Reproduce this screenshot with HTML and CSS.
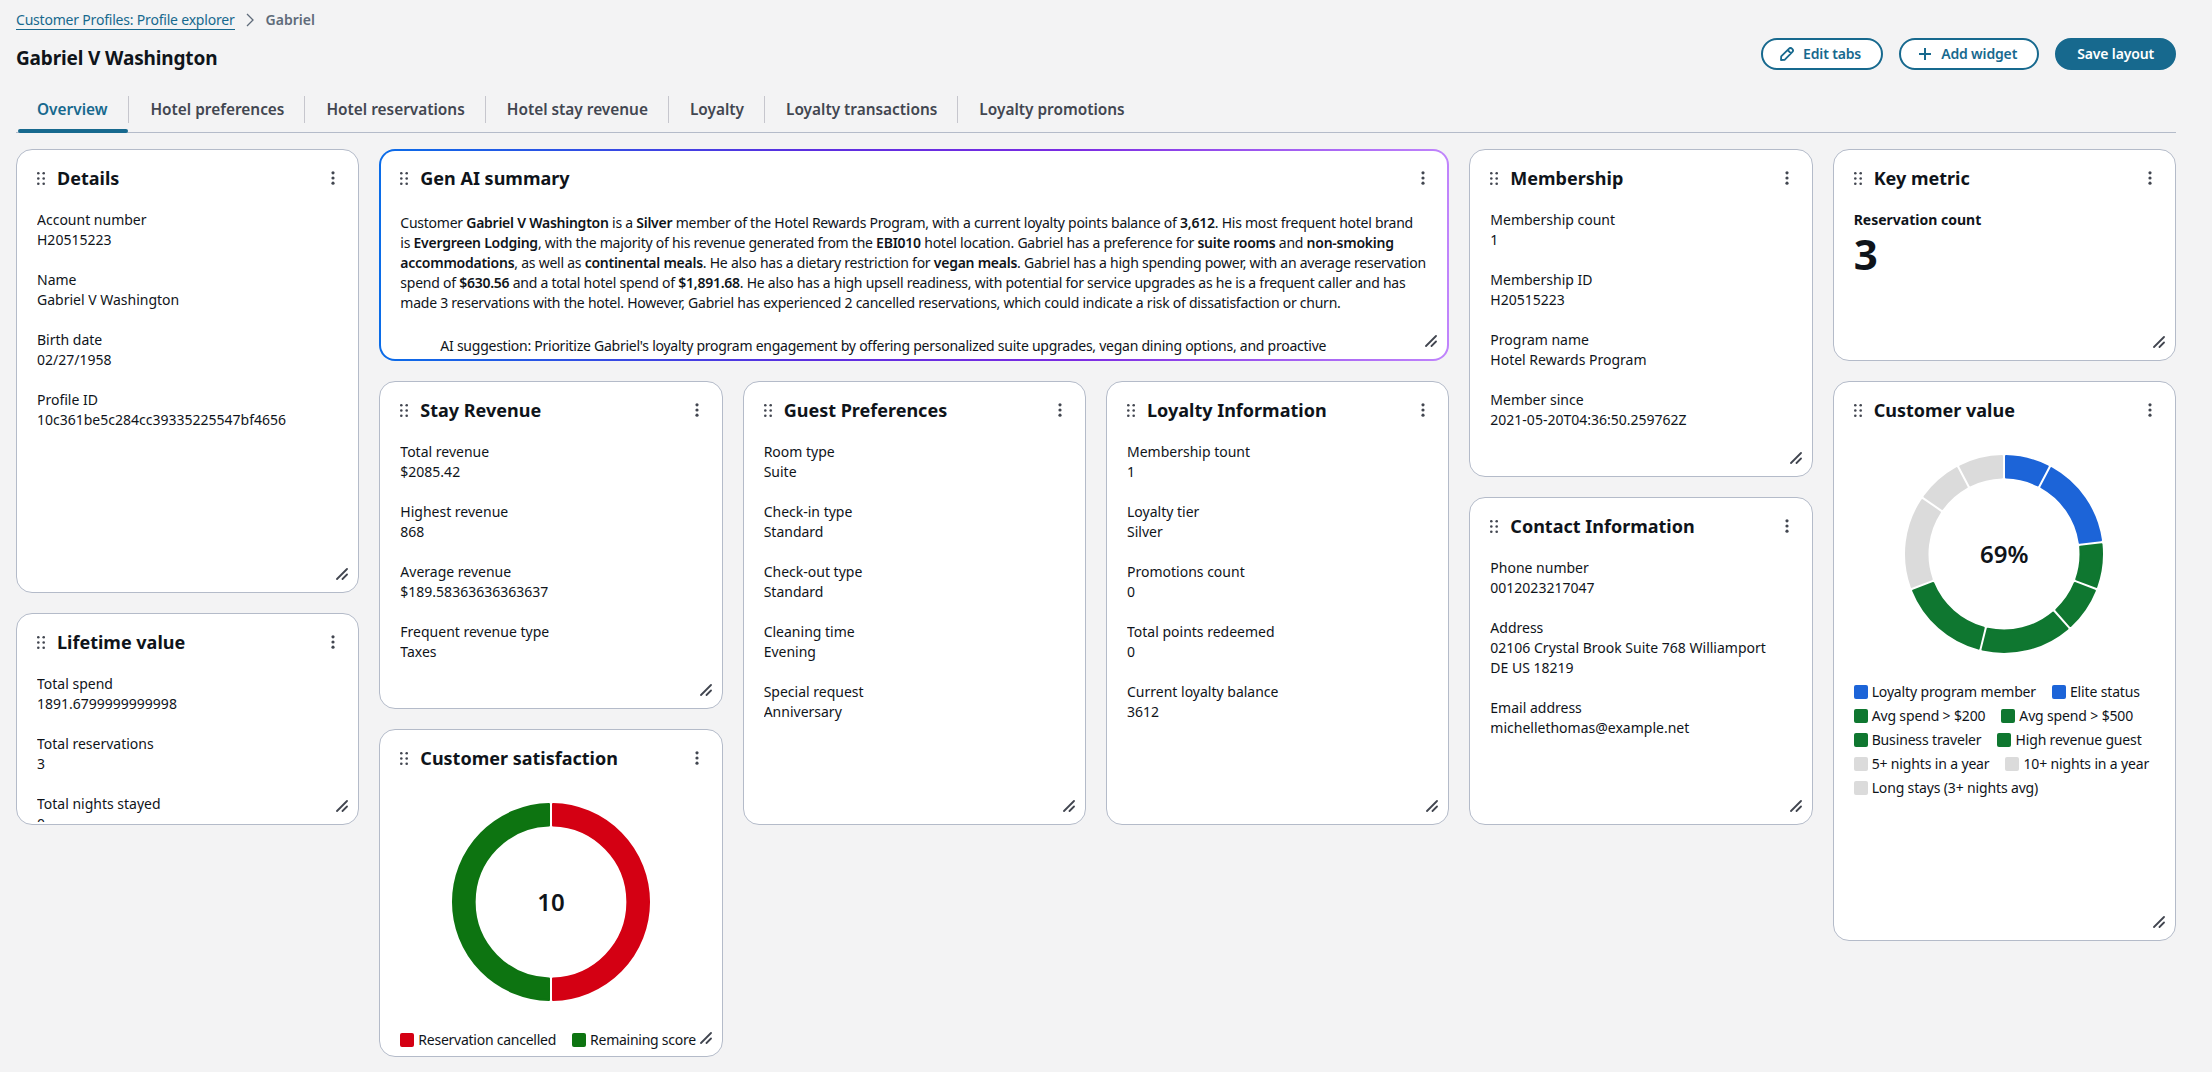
FILE: index.html
```html
<!DOCTYPE html>
<html lang="en">
<head>
    <meta charset="UTF-8">
    <title>Gabriel V Washington</title>
    <link rel="stylesheet" href="styles.css">
</head>
<body>
    <!-- Shared icons -->
    <svg class="sprite" aria-hidden="true">
        <symbol id="i-drag" viewBox="0 0 8 13">
            <circle cx="1.3" cy="1.3" r="1.3"/><circle cx="6.7" cy="1.3" r="1.3"/>
            <circle cx="1.3" cy="6.5" r="1.3"/><circle cx="6.7" cy="6.5" r="1.3"/>
            <circle cx="1.3" cy="11.7" r="1.3"/><circle cx="6.7" cy="11.7" r="1.3"/>
        </symbol>
        <symbol id="i-menu" viewBox="0 0 4 14">
            <circle cx="2" cy="1.8" r="1.6"/><circle cx="2" cy="7" r="1.6"/><circle cx="2" cy="12.2" r="1.6"/>
        </symbol>
        <symbol id="i-resize" viewBox="0 0 12 12">
            <path d="M1 11 11 1M6.5 11 11 6.5" fill="none" stroke="currentColor" stroke-width="1.8" stroke-linecap="round"/>
        </symbol>
    </svg>

    <header class="page-head">
        <div>
            <nav class="crumbs">
                <a href="#">Customer Profiles: Profile explorer</a>
                <svg class="crumb-arrow" viewBox="0 0 8 14"><path d="M1 1l6 6-6 6" fill="none" stroke="currentColor" stroke-width="1.3"/></svg>
                <span>Gabriel</span>
            </nav>
            <h1>Gabriel V Washington</h1>
        </div>
        <div class="actions">
            <button class="btn">
                <svg class="btn-icon" viewBox="0 0 14 14"><path d="M1.2 9.4 8.8 1.8a2.2 2.2 0 0 1 3.4 3.4L4.6 12.8 1 13zM7.6 3l3.4 3.4" fill="none" stroke="currentColor" stroke-width="1.8" stroke-linejoin="round"/></svg>
                Edit tabs
            </button>
            <button class="btn">
                <svg class="btn-icon" viewBox="0 0 14 14"><path d="M7 1v12M1 7h12" fill="none" stroke="currentColor" stroke-width="2"/></svg>
                Add widget
            </button>
            <button class="btn btn-primary">Save layout</button>
        </div>
    </header>

    <nav class="tabs">
        <a href="#" class="tab active">Overview</a>
        <a href="#" class="tab">Hotel preferences</a>
        <a href="#" class="tab">Hotel reservations</a>
        <a href="#" class="tab">Hotel stay revenue</a>
        <a href="#" class="tab">Loyalty</a>
        <a href="#" class="tab">Loyalty transactions</a>
        <a href="#" class="tab">Loyalty promotions</a>
    </nav>

    <main class="board">
        <section class="card w-details">
            <div class="card-head">
                <svg class="drag"><use href="#i-drag"/></svg><h2>Details</h2><svg class="menu"><use href="#i-menu"/></svg>
            </div>
            <dl class="fields">
                <div><dt>Account number</dt><dd>H20515223</dd></div>
                <div><dt>Name</dt><dd>Gabriel V Washington</dd></div>
                <div><dt>Birth date</dt><dd>02/27/1958</dd></div>
                <div><dt>Profile ID</dt><dd>10c361be5c284cc39335225547bf4656</dd></div>
            </dl>
            <svg class="resize"><use href="#i-resize"/></svg>
        </section>

        <section class="card w-lifetime">
            <div class="card-head">
                <svg class="drag"><use href="#i-drag"/></svg><h2>Lifetime value</h2><svg class="menu"><use href="#i-menu"/></svg>
            </div>
            <dl class="fields">
                <div><dt>Total spend</dt><dd>1891.6799999999998</dd></div>
                <div><dt>Total reservations</dt><dd>3</dd></div>
                <div><dt>Total nights stayed</dt><dd>0</dd></div>
            </dl>
            <svg class="resize"><use href="#i-resize"/></svg>
        </section>

        <section class="card card-ai w-summary">
            <div class="card-head">
                <svg class="drag"><use href="#i-drag"/></svg><h2>Gen AI summary</h2><svg class="menu"><use href="#i-menu"/></svg>
            </div>
            <div class="summary">
                <p>Customer <b>Gabriel V Washington</b> is a <b>Silver</b> member of the Hotel Rewards Program, with a current loyalty points balance of <b>3,612</b>. His most frequent hotel brand<br>
                is <b>Evergreen Lodging</b>, with the majority of his revenue generated from the <b>EBI010</b> hotel location. Gabriel has a preference for <b>suite rooms</b> and <b>non-smoking</b><br>
                <b>accommodations</b>, as well as <b>continental meals</b>. He also has a dietary restriction for <b>vegan meals</b>. Gabriel has a high spending power, with an average reservation<br>
                spend of <b>$630.56</b> and a total hotel spend of <b>$1,891.68</b>. He also has a high upsell readiness, with potential for service upgrades as he is a frequent caller and has<br>
                made 3 reservations with the hotel. However, Gabriel has experienced 2 cancelled reservations, which could indicate a risk of dissatisfaction or churn.</p>
                <p class="suggestion">AI suggestion: Prioritize Gabriel's loyalty program engagement by offering personalized suite upgrades, vegan dining options, and proactive</p>
            </div>
            <svg class="resize"><use href="#i-resize"/></svg>
        </section>

        <section class="card w-revenue">
            <div class="card-head">
                <svg class="drag"><use href="#i-drag"/></svg><h2>Stay Revenue</h2><svg class="menu"><use href="#i-menu"/></svg>
            </div>
            <dl class="fields">
                <div><dt>Total revenue</dt><dd>$2085.42</dd></div>
                <div><dt>Highest revenue</dt><dd>868</dd></div>
                <div><dt>Average revenue</dt><dd>$189.58363636363637</dd></div>
                <div><dt>Frequent revenue type</dt><dd>Taxes</dd></div>
            </dl>
            <svg class="resize"><use href="#i-resize"/></svg>
        </section>

        <section class="card w-prefs">
            <div class="card-head">
                <svg class="drag"><use href="#i-drag"/></svg><h2>Guest Preferences</h2><svg class="menu"><use href="#i-menu"/></svg>
            </div>
            <dl class="fields">
                <div><dt>Room type</dt><dd>Suite</dd></div>
                <div><dt>Check-in type</dt><dd>Standard</dd></div>
                <div><dt>Check-out type</dt><dd>Standard</dd></div>
                <div><dt>Cleaning time</dt><dd>Evening</dd></div>
                <div><dt>Special request</dt><dd>Anniversary</dd></div>
            </dl>
            <svg class="resize"><use href="#i-resize"/></svg>
        </section>

        <section class="card w-loyalty">
            <div class="card-head">
                <svg class="drag"><use href="#i-drag"/></svg><h2>Loyalty Information</h2><svg class="menu"><use href="#i-menu"/></svg>
            </div>
            <dl class="fields">
                <div><dt>Membership tount</dt><dd>1</dd></div>
                <div><dt>Loyalty tier</dt><dd>Silver</dd></div>
                <div><dt>Promotions count</dt><dd>0</dd></div>
                <div><dt>Total points redeemed</dt><dd>0</dd></div>
                <div><dt>Current loyalty balance</dt><dd>3612</dd></div>
            </dl>
            <svg class="resize"><use href="#i-resize"/></svg>
        </section>

        <section class="card w-satisfaction">
            <div class="card-head">
                <svg class="drag"><use href="#i-drag"/></svg><h2>Customer satisfaction</h2><svg class="menu"><use href="#i-menu"/></svg>
            </div>
            <div class="donut" data-values="red:1,forest:1" data-label="10"></div>
            <ul class="legend">
                <li><i class="red"></i>Reservation cancelled</li>
                <li><i class="forest"></i>Remaining score</li>
            </ul>
            <svg class="resize"><use href="#i-resize"/></svg>
        </section>

        <section class="card w-membership">
            <div class="card-head">
                <svg class="drag"><use href="#i-drag"/></svg><h2>Membership</h2><svg class="menu"><use href="#i-menu"/></svg>
            </div>
            <dl class="fields">
                <div><dt>Membership count</dt><dd>1</dd></div>
                <div><dt>Membership ID</dt><dd>H20515223</dd></div>
                <div><dt>Program name</dt><dd>Hotel Rewards Program</dd></div>
                <div><dt>Member since</dt><dd>2021-05-20T04:36:50.259762Z</dd></div>
            </dl>
            <svg class="resize"><use href="#i-resize"/></svg>
        </section>

        <section class="card w-contact">
            <div class="card-head">
                <svg class="drag"><use href="#i-drag"/></svg><h2>Contact Information</h2><svg class="menu"><use href="#i-menu"/></svg>
            </div>
            <dl class="fields">
                <div><dt>Phone number</dt><dd>0012023217047</dd></div>
                <div><dt>Address</dt><dd>02106 Crystal Brook Suite 768 Williamport<br>DE US 18219</dd></div>
                <div><dt>Email address</dt><dd>michellethomas@example.net</dd></div>
            </dl>
            <svg class="resize"><use href="#i-resize"/></svg>
        </section>

        <section class="card w-metric">
            <div class="card-head">
                <svg class="drag"><use href="#i-drag"/></svg><h2>Key metric</h2><svg class="menu"><use href="#i-menu"/></svg>
            </div>
            <div class="metric-label">Reservation count</div>
            <div class="metric-value">3</div>
            <svg class="resize"><use href="#i-resize"/></svg>
        </section>

        <section class="card w-value">
            <div class="card-head">
                <svg class="drag"><use href="#i-drag"/></svg><h2>Customer value</h2><svg class="menu"><use href="#i-menu"/></svg>
            </div>
            <div class="donut" data-values="blue:1,blue:2,green:1,green:1,green:2,green:2,grey:2,grey:1,grey:1" data-label="69%"></div>
            <ul class="legend">
                <li><i class="blue"></i>Loyalty program member</li>
                <li><i class="blue"></i>Elite status</li>
                <li><i class="green"></i>Avg spend &gt; $200</li>
                <li><i class="green"></i>Avg spend &gt; $500</li>
                <li><i class="green"></i>Business traveler</li>
                <li><i class="green"></i>High revenue guest</li>
                <li><i class="grey"></i>5+ nights in a year</li>
                <li><i class="grey"></i>10+ nights in a year</li>
                <li><i class="grey"></i>Long stays (3+ nights avg)</li>
            </ul>
            <svg class="resize"><use href="#i-resize"/></svg>
        </section>
    </main>

    <script src="charts.js"></script>
</body>
</html>
```

FILE: styles.css
```css
/* Page */
* {
    box-sizing: border-box;
}
body {
    margin: 0;
    padding: 0 36px 0 16px;
    background-color: #f3f3f4;
    color: #0f141a;
    font-family: "Noto Sans", Arial, sans-serif;
    font-size: 14px;
    line-height: 20px;
}
.sprite {
    display: none;
}

/* Header */
.page-head {
    display: flex;
    justify-content: space-between;
    padding-top: 10px;
    height: 90px;
}
.crumbs {
    display: flex;
    align-items: center;
    height: 20px;
    color: #5f6b7a;
}
.crumbs a {
    color: #17698e;
    text-decoration: none;
    border-bottom: 1px solid #17698e;
    line-height: 18px;
    letter-spacing: -0.2px;
}
.crumbs span {
    font-weight: 600;
}
.crumb-arrow {
    width: 8px;
    height: 14px;
    margin: 0 12px 0 11px;
}
h1 {
    margin: 16px 0 0;
    font-size: 19px;
    line-height: 24px;
    font-weight: 700;
    letter-spacing: -0.15px;
}
.actions {
    display: flex;
    gap: 16px;
    padding-top: 28px;
}
.btn {
    display: flex;
    align-items: center;
    justify-content: center;
    gap: 9px;
    height: 32px;
    padding: 0 20px 0 17px;
    border: 2px solid #17698e;
    border-radius: 20px;
    background: white;
    color: #17698e;
    font: 600 14px/20px "Noto Sans", Arial, sans-serif;
    letter-spacing: -0.15px;
}
.btn-primary {
    padding: 0 20px;
    background: #17698e;
    color: white;
}
.btn-icon {
    width: 14px;
    height: 14px;
}

/* Tabs */
.tabs {
    display: flex;
    height: 43px;
    border-bottom: 1px solid #b4bbc9;
    padding-top: 6px;
}
.tab {
    position: relative;
    height: 27px;
    padding: 0 20px 0 21px;
    border-right: 1px solid #c6c6cd;
    color: #424650;
    font-size: 15.4px;
    line-height: 27px;
    font-weight: 600;
    text-decoration: none;
}
.tab:first-child {
    padding-right: 21px;
}
.tab:last-child {
    border-right: none;
}
.tab.active {
    color: #17698e;
}
.tab.active::after {
    content: "";
    position: absolute;
    left: 2px;
    right: 0;
    bottom: -10px;
    height: 4px;
    border-radius: 2px;
    background: #17698e;
}

/* Board */
.board {
    display: grid;
    grid-template-columns: repeat(6, 1fr);
    grid-auto-rows: 96px;
    gap: 20px;
    margin-top: 16px;
}
.card {
    position: relative;
    display: flex;
    flex-direction: column;
    overflow: hidden;
    padding: 0 20px 2px;
    background: white;
    border: 1px solid #b4bbc9;
    border-radius: 16px;
}
.card-ai {
    border: 2px solid transparent;
    background: linear-gradient(white, white) padding-box,
        linear-gradient(90deg, #0a6ce8, #5b2ee0 40%, #7b2be2 65%, #c084fc) border-box;
    padding: 0 19px 2px;
}
.w-details { grid-column: 1; grid-row: 1 / span 4; }
.w-lifetime { grid-column: 1; grid-row: 5 / span 2; }
.w-summary { grid-column: 2 / span 3; grid-row: 1 / span 2; }
.w-revenue { grid-column: 2; grid-row: 3 / span 3; }
.w-prefs { grid-column: 3; grid-row: 3 / span 4; }
.w-loyalty { grid-column: 4; grid-row: 3 / span 4; }
.w-satisfaction { grid-column: 2; grid-row: 6 / span 3; }
.w-membership { grid-column: 5; grid-row: 1 / span 3; }
.w-contact { grid-column: 5; grid-row: 4 / span 3; }
.w-metric { grid-column: 6; grid-row: 1 / span 2; }
.w-value { grid-column: 6; grid-row: 3 / span 5; }

.card-head {
    display: flex;
    align-items: center;
    flex: none;
    height: 56px;
}
.card-ai .card-head {
    height: 54px;
}
.card-head h2 {
    flex: 1;
    margin: 0 0 0 12px;
    font-size: 18px;
    line-height: 22px;
    font-weight: 700;
}
.drag {
    width: 8px;
    height: 13px;
    fill: #424650;
}
.menu {
    width: 4px;
    height: 14px;
    margin-right: 3px;
    fill: #424650;
}
.resize {
    position: absolute;
    right: 10px;
    bottom: 12px;
    width: 12px;
    height: 12px;
    color: #424650;
}

/* Key/value lists */
.fields {
    flex: 1;
    overflow: hidden;
    margin: 4px 0 0;
}
.fields div {
    margin-bottom: 20px;
}
.fields dd {
    margin: 0;
}

/* Summary widget */
.summary {
    flex: 1;
    overflow: hidden;
    margin-top: 8px;
    letter-spacing: -0.25px;
    white-space: nowrap;
}
.summary b {
    font-weight: 600;
}
.summary p {
    margin: 0;
}
.summary .suggestion {
    margin-top: 23px;
    padding-left: 40px;
}

/* Key metric widget */
.metric-label {
    margin-top: 4px;
    font-weight: 700;
}
.metric-value {
    font-size: 42px;
    line-height: 48px;
    font-weight: 700;
}

/* Charts */
.donut {
    position: relative;
    flex: none;
    width: 200px;
    height: 200px;
    margin: 16px auto 0;
}
.donut svg {
    display: block;
}
.donut-label {
    position: absolute;
    inset: 0;
    display: flex;
    align-items: center;
    justify-content: center;
    font-size: 24px;
    font-weight: 600;
}
.seg-blue { fill: #1c64d8; stroke: #1c64d8; }
.seg-green { fill: #0f7730; stroke: #0f7730; }
.seg-forest { fill: #0d7411; stroke: #0d7411; }
.seg-grey { fill: #dbdbdb; stroke: #dbdbdb; }
.seg-red { fill: #d40013; stroke: #d40013; }

.legend {
    display: flex;
    flex-wrap: wrap;
    gap: 4px 16px;
    margin: 28px 0 0;
    padding: 0;
    list-style: none;
    letter-spacing: -0.15px;
}
.legend li {
    display: flex;
    align-items: center;
    gap: 4px;
    white-space: nowrap;
}
.legend i {
    width: 14px;
    height: 14px;
    border-radius: 2px;
}
.legend .blue { background: #1c64d8; }
.legend .green { background: #0f7730; }
.legend .forest { background: #0d7411; }
.legend .grey { background: #dbdbdb; }
.legend .red { background: #d40013; }
.w-satisfaction .legend {
    flex-wrap: nowrap;
    letter-spacing: -0.25px;
}
```

FILE: charts.js
```js
// Draws the donut charts from their data-values attribute
var OUTER = 98;
var INNER = 76.5;

function point(r, a) {
    return (100 + r * Math.sin(a)).toFixed(2) + ' ' + (100 - r * Math.cos(a)).toFixed(2);
}

function segmentPath(start, end) {
    var large = end - start > Math.PI ? 1 : 0;
    var inset = 2;
    var o = inset / OUTER;
    var i = inset / INNER;
    return 'M' + point(OUTER, start + o) +
        'A' + OUTER + ' ' + OUTER + ' 0 ' + large + ' 1 ' + point(OUTER, end - o) +
        'L' + point(INNER, end - i) +
        'A' + INNER + ' ' + INNER + ' 0 ' + large + ' 0 ' + point(INNER, start + i) + 'Z';
}

document.querySelectorAll('.donut').forEach(function (el) {
    var parts = el.dataset.values.split(',').map(function (p) {
        var kv = p.split(':');
        return { color: kv[0], value: Number(kv[1]) };
    });
    var total = parts.reduce(function (sum, p) { return sum + p.value; }, 0);
    var angle = 0;
    var paths = parts.map(function (p) {
        var next = angle + (p.value / total) * Math.PI * 2;
        var d = segmentPath(angle, next);
        angle = next;
        return '<path class="seg-' + p.color + '" d="' + d + '" stroke-width="2" stroke-linejoin="round"/>';
    });
    el.innerHTML = '<svg width="200" height="200" viewBox="0 0 200 200">' + paths.join('') + '</svg>' +
        '<div class="donut-label">' + el.dataset.label + '</div>';
});
```
